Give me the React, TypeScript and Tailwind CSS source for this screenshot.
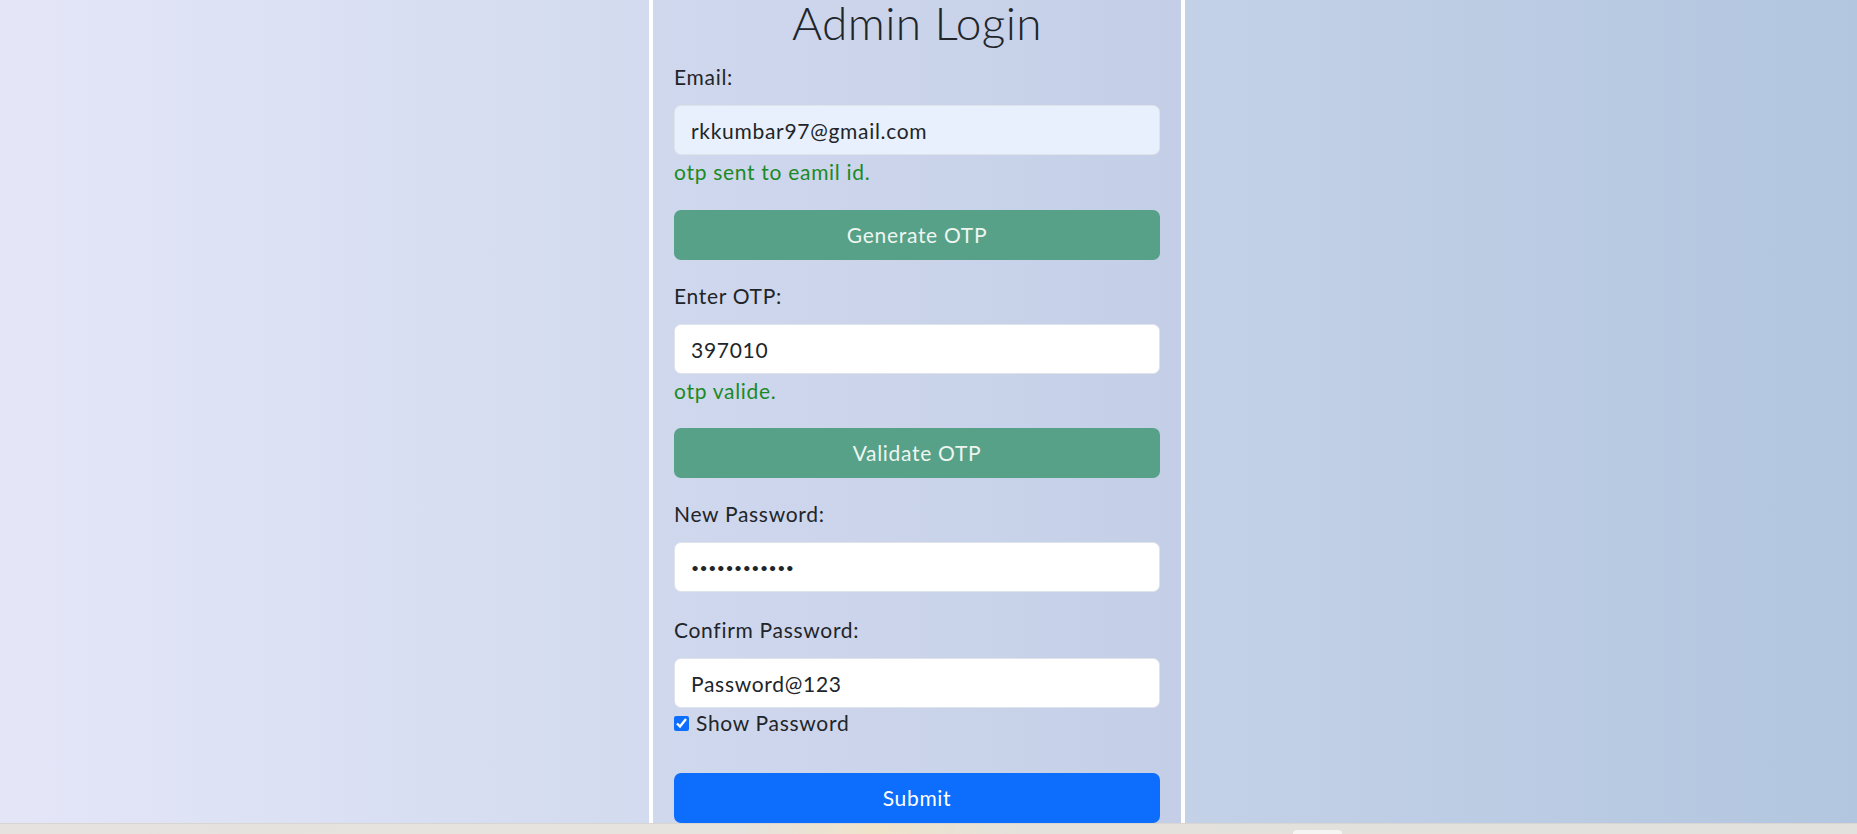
const font = { fontFamily: "Lato, 'Open Sans', sans-serif" };

const Label = ({ children, className = "" }: { children: React.ReactNode; className?: string }) => (
  <label className={`block text-[21px] tracking-[0.7px] leading-[30px] text-[#212529] mb-[13px] ${className}`}>
    {children}
  </label>
);

const Field = ({
  value,
  bg = "bg-white",
  text = "text-[21px] tracking-[0.7px]",
}: {
  value: string;
  bg?: string;
  text?: string;
}) => (
  <input
    readOnly
    type="text"
    value={value}
    className={`block w-full h-[50px] px-[16px] rounded-[7px] border border-[#dfe3ea] ${bg} ${text} text-[#212529] outline-none`}
  />
);

const Message = ({ text }: { text: string }) => (
  <div className="mt-[2px] text-[21px] tracking-[0.7px] leading-[30px] text-[#1b8a25]">{text}</div>
);

const Btn = ({ label, color, className = "" }: { label: string; color: string; className?: string }) => (
  <button className={`block w-full h-[50px] rounded-[7px] text-[21px] tracking-[0.7px] ${color} ${className}`}>
    {label}
  </button>
);

export default function App() {
  return (
    <div
      style={font}
      className="h-[834px] w-full flex flex-col overflow-hidden bg-gradient-to-r from-[#e4e6f8] to-[#b2c6df]"
    >
      <div className="flex-1 flex justify-center overflow-hidden">
        <div className="w-[536px] mr-[23px] border-x-4 border-white bg-gradient-to-r from-[#d0d8ee] to-[#c4cfe7] px-[21px]">
          <h1 className="text-center text-[46px] tracking-[0.4px] leading-[46px] font-light text-[#212529]">
            Admin Login
          </h1>

          <Label className="mt-[16px]">Email:</Label>
          <Field value="rkkumbar97@gmail.com" bg="bg-[#e8f0fe]" />
          <Message text="otp sent to eamil id." />
          <Btn label="Generate OTP" color="bg-[#56a187] text-[#eef5f1]" className="mt-[23px]" />

          <Label className="mt-[21px]">Enter OTP:</Label>
          <Field value="397010" />
          <Message text="otp valide." />
          <Btn label="Validate OTP" color="bg-[#56a187] text-[#eef5f1]" className="mt-[22px]" />

          <Label className="mt-[21px]">New Password:</Label>
          <Field value="••••••••••••" text="text-[14px] tracking-[0.5px]" />

          <Label className="mt-[23px]">Confirm Password:</Label>
          <Field value="Password@123" />
          <div className="flex items-center gap-[7px] h-[30px]">
            <input type="checkbox" checked readOnly className="w-[15px] h-[15px] accent-[#0d6efd]" />
            <span className="text-[21px] tracking-[0.7px] text-[#212529]">Show Password</span>
          </div>

          <Btn label="Submit" color="bg-[#0d6efd] text-white" className="mt-[35px]" />
        </div>
      </div>
      <div className="relative h-[11px] shrink-0 bg-[linear-gradient(90deg,#e5e2df_0%,#e6e2dd_40%,#efe3cb_47%,#e4e1dc_55%,#e3e1dd_100%)] border-t border-[#d9d6d2]">
        <div className="absolute left-[1293px] top-[6px] w-[49px] h-[8px] rounded-t-[4px] bg-[#f6f5f4]" />
      </div>
    </div>
  );
}
